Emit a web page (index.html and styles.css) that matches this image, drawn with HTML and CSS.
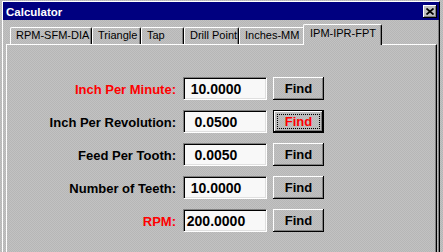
FILE: index.html
```html
<!DOCTYPE html>
<html lang="en">
<head>
    <meta charset="UTF-8">
    <meta name="viewport" content="width=device-width, initial-scale=1.0">
    <title>Calculator</title>
    <link rel="stylesheet" href="styles.css">
</head>
<body>
    <div class="window">
        <div class="titlebar">
            <span class="title">Calculator</span>
            <button class="close-btn" aria-label="Close">
                <svg width="8" height="7" viewBox="0 0 8 7">
                    <path d="M0.5 0.5L7.5 6.5M7.5 0.5L0.5 6.5" stroke="#000" stroke-width="1.7" fill="none"/>
                </svg>
            </button>
        </div>

        <div class="tabs">
            <div class="tab tab-rpm">RPM-SFM-DIA</div>
            <div class="tab tab-tri">Triangle</div>
            <div class="tab tab-tap">Tap</div>
            <div class="tab tab-drill">Drill Point</div>
            <div class="tab tab-mm">Inches-MM</div>
            <div class="tab tab-ipm active">IPM-IPR-FPT</div>
        </div>

        <div class="panel">
            <div class="form">
                <label class="field-label red">Inch Per Minute:</label>
                <input class="field" type="text" value="10.0000" readonly>
                <button class="find">Find</button>

                <label class="field-label">Inch Per Revolution:</label>
                <input class="field" type="text" value="0.0500" readonly>
                <button class="find default"><span class="focus">Find</span></button>

                <label class="field-label">Feed Per Tooth:</label>
                <input class="field" type="text" value="0.0050" readonly>
                <button class="find">Find</button>

                <label class="field-label">Number of Teeth:</label>
                <input class="field" type="text" value="10.0000" readonly>
                <button class="find">Find</button>

                <label class="field-label red">RPM:</label>
                <input class="field" type="text" value="200.0000" readonly>
                <button class="find">Find</button>
            </div>
        </div>
    </div>
</body>
</html>
```

FILE: styles.css
```css
* {
    box-sizing: border-box;
}

body {
    margin: 0;
    height: 252px;
    overflow: hidden;
    font-family: "Liberation Sans", Arial, sans-serif;
    color: #000;
    background: repeating-conic-gradient(#c2c2c2 0 25%, #b6b6b6 0 50%) 0 0 / 2px 2px;
}

.window {
    display: flex;
    flex-direction: column;
    margin: 1px 0 0 2px;
    width: 438px;
    height: 251px;
    border-left: 1px solid #fff;
    border-top: 1px solid #fff;
    border-right: 1px solid #000;
    box-shadow: inset -1px 0 #808080;
}

/* title bar */
.titlebar {
    display: flex;
    align-items: center;
    justify-content: space-between;
    height: 18px;
    padding: 1px 2px 0 3px;
    background-color: #000080;
    color: #fff;
}

.title {
    font-size: 11.5px;
    font-weight: bold;
}

.close-btn {
    width: 14px;
    height: 13px;
    padding: 0 1px 1px 0;
    border: none;
    background-color: #c0c0c0;
    box-shadow: inset -1px -1px #000, inset 1px 1px #fff, inset -2px -2px #808080;
    display: flex;
    align-items: center;
    justify-content: center;
}

/* tabs */
.tabs {
    display: flex;
    align-items: flex-end;
    height: 24px;
    padding: 4px 0 0 7px;
}

.tab {
    height: 17px;
    padding: 1px 0 0 5px;
    font-size: 11px;
    line-height: 13px;
    white-space: nowrap;
    border-left: 1px solid #fff;
    border-top: 1px solid #fff;
    border-right: 1px solid #000;
    border-radius: 2px 2px 0 0;
    box-shadow: inset -1px 0 #808080;
}

.tab-rpm { width: 82px; }
.tab-tri { width: 49px; }
.tab-tap { width: 43px; }
.tab-drill { width: 55px; }
.tab-mm { width: 66px; }

.tab.active {
    position: relative;
    z-index: 1;
    width: 79px;
    height: 21px;
    margin-left: -2px;
    margin-bottom: -1px;
    padding: 2px 0 0 6px;
    background: repeating-conic-gradient(#c2c2c2 0 25%, #b6b6b6 0 50%) 0 0 / 2px 2px;
}

/* panel */
.panel {
    flex: 1;
    margin: 0 2px 0 3px;
    padding-top: 32px;
    border-left: 1px solid #fff;
    border-top: 1px solid #fff;
    border-right: 1px solid #000;
    box-shadow: inset -1px 0 #808080;
}

.form {
    display: grid;
    grid-template-columns: 170px 84px 51px;
    grid-auto-rows: 23px;
    column-gap: 6px;
    row-gap: 10px;
    align-items: center;
}

.field-label {
    padding: 2px 1px 0 0;
    text-align: right;
    font-size: 13px;
    font-weight: bold;
    line-height: 15px;
    white-space: nowrap;
}

.red {
    color: #f00;
}

.field {
    width: 84px;
    height: 23px;
    padding: 0 18px 0 0;
    font-family: "Liberation Sans", Arial, sans-serif;
    font-size: 14px;
    font-weight: bold;
    text-align: center;
    color: #000;
    background-color: #f8f8f8;
    border: 1px solid;
    border-color: #808080 #fff #fff #808080;
    box-shadow: inset 1px 1px #000, inset -1px -1px #dfdfdf;
    outline: none;
}

.find {
    width: 51px;
    height: 23px;
    padding: 0;
    font-family: "Liberation Sans", Arial, sans-serif;
    font-size: 13px;
    font-weight: bold;
    color: #000;
    background: transparent;
    border: none;
    box-shadow: inset -1px -1px #000, inset 1px 1px #fff, inset -2px -2px #808080;
    display: flex;
    align-items: center;
    justify-content: center;
}

.find.default {
    border: 1px solid #000;
    color: #f00;
    align-items: stretch;
}

.focus {
    flex: 1;
    margin: 3px;
    border: 1px dotted #000;
    display: flex;
    align-items: center;
    justify-content: center;
}
```
